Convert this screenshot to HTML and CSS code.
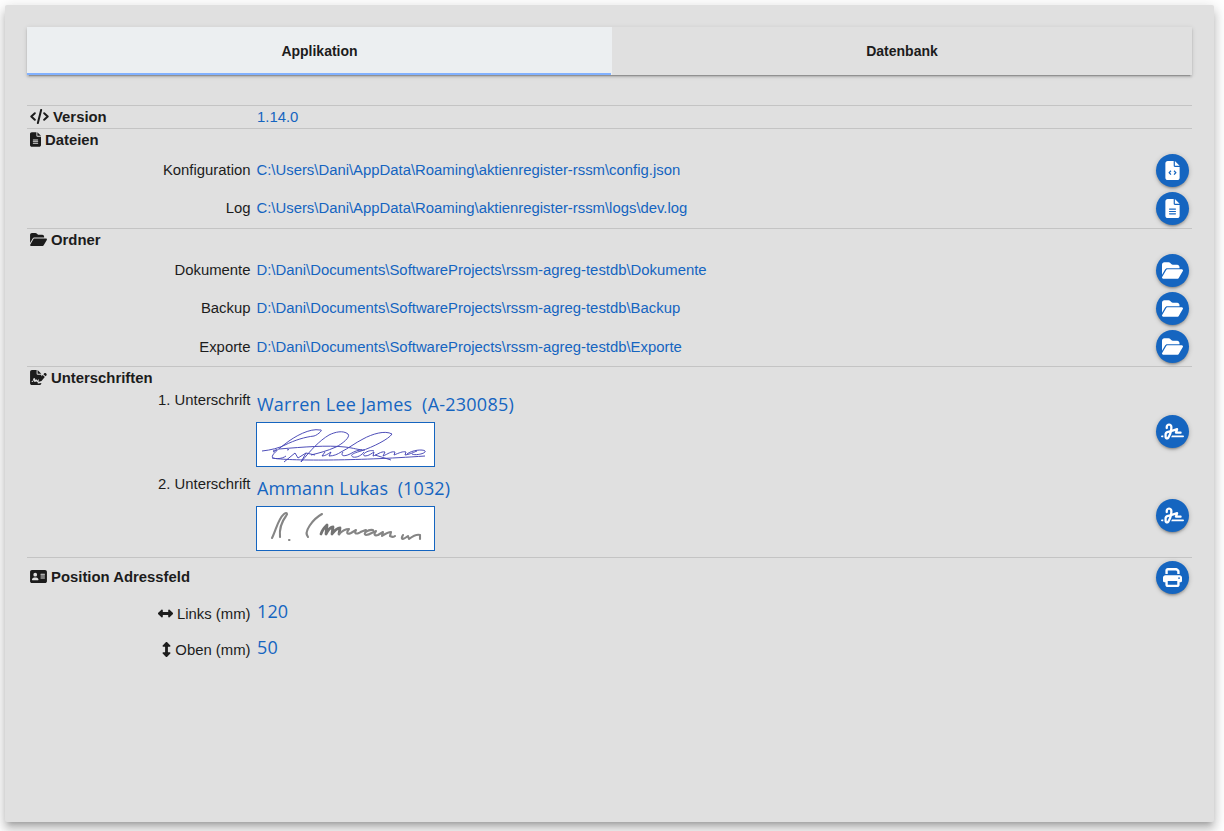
FILE: index.html
```html
<!DOCTYPE html>
<html lang="de">
<head>
<meta charset="utf-8">
<title>Einstellungen</title>
<link rel="stylesheet" href="styles.css">
</head>
<body>
<svg class="defs" aria-hidden="true">
  <symbol id="folder" viewBox="0 0 576 512"><path d="M88.7 223.8L0 375.8V96C0 60.7 28.7 32 64 32H181.5c17 0 33.3 6.7 45.3 18.7l26.5 26.5c12 12 28.3 18.7 45.3 18.7H416c35.3 0 64 28.7 64 64v32H144c-22.8 0-43.8 12.1-55.3 31.8zm27.6 16.1C122.1 230 132.6 224 144 224H544c11.5 0 22 6.1 27.7 16.1s5.7 22.2-.1 32.1l-112 192C453.9 474 443.4 480 432 480H32c-11.5 0-22-6.1-27.7-16.1s-5.7-22.2 .1-32.1l112-192z"/></symbol>
  <symbol id="file" viewBox="0 0 384 512"><path d="M64 0C28.7 0 0 28.7 0 64V448c0 35.3 28.7 64 64 64H320c35.3 0 64-28.7 64-64V160H256c-17.7 0-32-14.3-32-32V0H64zM256 0V128H384L256 0zM112 256H272c8.8 0 16 7.2 16 16s-7.2 16-16 16H112c-8.8 0-16-7.2-16-16s7.2-16 16-16zm0 64H272c8.8 0 16 7.2 16 16s-7.2 16-16 16H112c-8.8 0-16-7.2-16-16s7.2-16 16-16zm0 64H272c8.8 0 16 7.2 16 16s-7.2 16-16 16H112c-8.8 0-16-7.2-16-16s7.2-16 16-16z"/></symbol>
  <symbol id="filecode" viewBox="0 0 384 512"><path d="M64 0C28.7 0 0 28.7 0 64V448c0 35.3 28.7 64 64 64H320c35.3 0 64-28.7 64-64V160H256c-17.7 0-32-14.3-32-32V0H64zM256 0V128H384L256 0z"/><path class="cut" d="M150 262L103 314l47 52M234 262l47 52-47 52"/></symbol>
  <symbol id="code" viewBox="0 0 640 512"><path class="line" d="M160 144L40 256l120 112M480 144l120 112-120 112M376 32L264 480"/></symbol>
  <symbol id="filesign" viewBox="0 0 576 512"><path d="M64 0C28.7 0 0 28.7 0 64V448c0 35.3 28.7 64 64 64H320c35.3 0 64-28.7 64-64V440l-96 18c-24 2-34-10-28-34l4-16h-20c-12 0-22-7-28-18l-6-12-22 27c-14 14-38 10-44-8l-18-57-17 40c-6 20-22 31-43 28H56V376h24c6 0 9-3 11-9l24-74c9-27 45-27 53 0l19 51 15-9c14-11 34-9 42 7l14 22 6-16L384 226V160H256c-17.700 0-32-14.300-32-32V0H64zM256 0V128H384L256 0zM557 130l-15-15c-16-16-41-16-57 0l-30 30 72 72 30-30c15-16 15-42 0-57zM432 167L312 287l-24 98c-2 9 6 16 14 14l88-22 114-138z"/></symbol>
  <symbol id="card" viewBox="0 0 576 512"><path fill-rule="evenodd" d="M64 32C28.700 32 0 60.700 0 96V416c0 35.300 28.700 64 64 64H512c35.300 0 64-28.700 64-64V96c0-35.300-28.700-64-64-64zM144 288h64c44 0 80 36 80 80 0 9-7 16-16 16H80c-9 0-16-7-16-16 0-44 36-80 80-80zM112 192a64 64 0 1 1 128 0 64 64 0 1 1-128 0zM368 160H496c20 0 20 32 0 32H368c-20 0-20-32 0-32zm0 64H496c20 0 20 32 0 32H368c-20 0-20-32 0-32zm0 64H496c20 0 20 32 0 32H368c-20 0-20-32 0-32z"/></symbol>
  <symbol id="print" viewBox="0 0 512 512"><path d="M128 0C92.700 0 64 28.700 64 64v96h64V64H354.700L384 93.300V160h64V93.300c0-17-6.700-33.300-18.700-45.300L400 18.700C388 6.700 371.700 0 354.700 0H128zM384 352v32 64H128V384 368 352H384zm64 32h32c17.700 0 32-14.300 32-32V256c0-35.300-28.700-64-64-64H64c-35.300 0-64 28.700-64 64v96c0 17.700 14.300 32 32 32H64v64c0 35.300 28.700 64 64 64H384c35.300 0 64-28.700 64-64V384zM432 248a24 24 0 1 1 0 48 24 24 0 1 1 0-48z"/></symbol>
  <symbol id="sign" viewBox="0 0 640 512"><path d="M192 128c0-17.700 14.300-32 32-32s32 14.300 32 32v7.800c0 27.700-2.400 55.300-7.100 82.500l-84.400 25.300c-40.600 12.200-68.400 49.600-68.400 92v71.900c0 40 32.500 72.500 72.500 72.500c26 0 50-13.900 62.900-36.500l13.900-24.300c26.800-47 46.500-97.700 58.400-150.500l94.400-28.300-12.500 37.500c-3.300 9.800-1.600 20.500 4.400 28.800s15.700 13.300 26 13.300H544c17.700 0 32-14.300 32-32s-14.300-32-32-32H460.400l18-53.900c3.800-11.300 .9-23.800-7.400-32.400s-20.700-11.800-32.200-8.400L316.400 198.100c2.400-20.700 3.600-41.400 3.600-62.300V128c0-53-43-96-96-96s-96 43-96 96v32c0 17.700 14.300 32 32 32s32-14.300 32-32V128zm-9.200 177l49-14.700c-10.400 33.800-24.500 66.400-42.100 97.200l-13.900 24.300c-1.500 2.600-4.300 4.300-7.400 4.300c-4.700 0-8.500-3.800-8.500-8.500V335.600c0-14.100 9.300-26.600 22.800-30.700zM24 368c-13.300 0-24 10.700-24 24s10.700 24 24 24H64.300c-.2-2.800-.3-5.600-.3-8.500V368H24zm592 48c13.300 0 24-10.700 24-24s-10.700-24-24-24H305.900c-6.700 16.300-14.200 32.300-22.300 48H616z"/></symbol>
  <symbol id="arrow" viewBox="0 0 512 512"><path d="M8 232L118 126c16-15 46-4 46 22v60H348v-60c0-26 30-37 46-22L504 232c11 13 11 35 0 48L394 386c-16 15-46 4-46-22v-60H164v60c0 26-30 37-46 22L8 280c-11-13-11-35 0-48z"/></symbol>
</svg>
<main class="panel">
  <nav class="tabs"><a class="tab active">Applikation</a><a class="tab">Datenbank</a></nav>

  <section class="section version">
    <h2><svg class="ic code"><use href="#code"/></svg>Version</h2><span class="value">1.14.0</span>
  </section>

  <section class="section files">
    <h2><svg class="ic file"><use href="#file"/></svg>Dateien</h2>
    <div class="row"><span class="label">Konfiguration</span><span class="value">C:\Users\Dani\AppData\Roaming\aktienregister-rssm\config.json</span><button class="fab"><svg class="doc"><use href="#filecode"/></svg></button></div>
    <div class="row"><span class="label">Log</span><span class="value">C:\Users\Dani\AppData\Roaming\aktienregister-rssm\logs\dev.log</span><button class="fab"><svg class="doc"><use href="#file"/></svg></button></div>
  </section>

  <section class="section folders">
    <h2><svg class="ic wide"><use href="#folder"/></svg>Ordner</h2>
    <div class="row"><span class="label">Dokumente</span><span class="value">D:\Dani\Documents\SoftwareProjects\rssm-agreg-testdb\Dokumente</span><button class="fab"><svg class="dir"><use href="#folder"/></svg></button></div>
    <div class="row"><span class="label">Backup</span><span class="value">D:\Dani\Documents\SoftwareProjects\rssm-agreg-testdb\Backup</span><button class="fab"><svg class="dir"><use href="#folder"/></svg></button></div>
    <div class="row"><span class="label">Exporte</span><span class="value">D:\Dani\Documents\SoftwareProjects\rssm-agreg-testdb\Exporte</span><button class="fab"><svg class="dir"><use href="#folder"/></svg></button></div>
  </section>

  <section class="section signatures">
    <h2><svg class="ic wide"><use href="#filesign"/></svg>Unterschriften</h2>
    <div class="signrow"><span class="label">1. Unterschrift</span>
      <div class="signer"><span class="name long">Warren Lee James&nbsp; (A-230085)</span>
        <svg class="scan ink" viewBox="0 0 177 43">
          <path d="M5 28C14 27 22 25 28 22 38 17 48 14 57 13c4-1 10-7 6-6C53 5 38 13 28 21c-8 6-15 12-12 14 3 1 9 1 13-2M16 29c8-4 2-2 0-1M30 27l2-.5"/>
          <path d="M22 26c25-2 48-4 66-2 9 1 13 3 20 3"/>
          <path d="M27 39L38 30l3 5 8-5-5 9C54 27 62 18 72 12c6-3 14-5 19-1 3 3-6 10-12 13-9 4-17 6-25 8M49 30l9 2"/>
          <path d="M68 29l-3 4c3 0 6-2 9-4l-2 4c5 0 9-2 12-4 8-4 14-9 22-13 9-5 22-9 29-5-3 5-19 13-31 17-7 2-12 4-8 6 4 1 9-2 11-5M86 29c-3 4 1 5 7 2 5-3 8-4 12-4"/>
          <path d="M117 28c-5-2-14 4-9 5 4 0 7-3 9-4l-1 4c4-1 8-5 12-4l-2 4c5-2 8-5 12-4l-1 3c5-2 9-4 12-3l-1 3c6-1 9-3 12-4M150 31c5-4 16-5 18-3 2 2-9 5-13 3"/>
          <path d="M15 35c16 3 83 3 153-2M118 32l16 5"/>
        </svg>
      </div><button class="fab"><svg class="sig"><use href="#sign"/></svg></button></div>
    <div class="signrow"><span class="label">2. Unterschrift</span>
      <div class="signer"><span class="name">Ammann Lukas&nbsp; (1032)</span>
        <svg class="scan pencil" viewBox="0 0 177 43">
          <path d="M15 31C19 23 21 12 27 7c3-2 4 0 2 2-3 4-7 11-6 21"/>
          <path d="M32 33h.5M65 7C56 12 46 25 51 30"/>
          <path class="thick" d="M64 27c1-4 4-7 6-9l-1 9c2-4 5-7 7-7l-1 7c3-4 5-6 8-6l-1 6"/>
          <path d="M82 27c3-3 7-5 10-5-3 4-2 6 2 4l5-3c-2 4 0 4 3 3 3-2 5-2 7-3M116 23c-5-1-11 4-7 5 4 0 8-4 10-4-3 4-1 5 2 4l5-3-1 4c3-2 6-4 9-4l-1 4c2 1 4 1 5 0M146 28c-3 5 0 5 5 1l1 3c4-3 8-5 11-4l0 4"/>
        </svg>
      </div><button class="fab"><svg class="sig"><use href="#sign"/></svg></button></div>
  </section>

  <section class="section position">
    <div class="poshead"><h2><svg class="ic wide"><use href="#card"/></svg>Position Adressfeld</h2><button class="fab"><svg class="printer"><use href="#print"/></svg></button></div>
    <div class="posrow"><span class="label"><svg class="arr"><use href="#arrow"/></svg>Links (mm)</span><span class="name">120</span></div>
    <div class="posrow"><span class="label"><svg class="arr up"><use href="#arrow"/></svg>Oben (mm)</span><span class="name">50</span></div>
  </section>
</main>
</body>
</html>
```
FILE: styles.css
```css
* { box-sizing: border-box; }
body { margin: 0; padding: 5px 10px 9px 5px; height: 831px; overflow: hidden; background: #fff; color: #1c1c1c; font: 14.86px/20px "Liberation Sans", Arial, sans-serif; }
.defs { display: none; }
svg { fill: currentColor; flex: none; }
.line { fill: none; stroke: currentColor; stroke-width: 68; stroke-linecap: round; stroke-linejoin: round; }
.cut { fill: none; stroke: #1565c0; stroke-width: 34; }
.panel { height: 817px; padding: 22px; border-radius: 2px; background: #e0e0e0; box-shadow: 0 5px 5px -3px rgba(0,0,0,.2), 0 8px 10px 1px rgba(0,0,0,.14), 0 3px 14px 2px rgba(0,0,0,.12); }
.tabs { display: flex; height: 48px; margin-bottom: 30px; box-shadow: 0 3px 1px -2px rgba(0,0,0,.2), 0 2px 2px rgba(0,0,0,.14), 0 1px 5px rgba(0,0,0,.12); }
.tab { flex: 1; display: flex; align-items: center; justify-content: center; font-size: 14px; font-weight: bold; }
.active { flex: 0 0 585px; background: linear-gradient(#82b1ff, #82b1ff) left bottom / 584px 2px no-repeat #eceff1; }
.section { border-top: 1px solid #c4c4c4; }
h2 { display: flex; align-items: center; gap: 4px; width: 227px; height: 22px; margin: 0; padding-left: 3px; font-size: 14.86px; line-height: 22px; white-space: nowrap; }
.ic { height: 15px; margin-top: -1px; }
.code { width: 19px; }
.file { width: 11px; }
.wide { width: 17px; }
.version { display: flex; align-items: center; height: 23px; }
.version .value { margin-left: 3px; }
.files { height: 100px; }
.folders { height: 138px; }
.signatures { height: 191px; }
.label { width: 223.5px; text-align: right; flex: none; }
.value, .name { color: #1565c0; }
.row { display: flex; align-items: center; height: 38.3px; }
.row .value { margin-left: 6px; }
.fab { display: flex; align-items: center; justify-content: center; width: 33px; height: 33px; margin: 0 3px 0 auto; padding: 0; border: 0; border-radius: 50%; color: #fff; background: #1565c0; box-shadow: 0 2px 2px rgba(0,0,0,.14), 0 3px 1px -2px rgba(0,0,0,.12), 0 1px 5px rgba(0,0,0,.2); }
.doc { width: 15px; height: 19px; }
.dir { width: 21px; height: 19px; }
.sig { width: 23px; height: 19px; }
.printer { width: 19px; height: 19px; }
.signrow { display: flex; height: 84px; }
.signrow .label { padding-top: 1px; }
.signrow .fab { margin-top: 26px; }
.signer { display: flex; flex-direction: column; margin-left: 5.5px; }
.name { font: 18px/24px "Open Sans", "Segoe UI", sans-serif; letter-spacing: .1px; white-space: nowrap; }
.long { letter-spacing: .23px; }
.signer .name { height: 33px; padding: 3px 0 0 1px; }
.scan { width: 179px; height: 45px; border: 1px solid #1565c0; background: #fff; fill: none; }
.ink { stroke: #4545b4; stroke-width: .95; stroke-linejoin: round; }
.pencil { stroke: #858585; stroke-width: 2.1; stroke-linecap: round; stroke-linejoin: round; }
.thick { stroke: #737373; stroke-width: 2.8; }
.poshead { display: flex; align-items: center; height: 38px; }
.posrow { display: flex; align-items: center; height: 36px; }
.posrow .label { display: flex; align-items: center; justify-content: flex-end; gap: 4px; }
.posrow .name { margin-left: 6.5px; padding-bottom: 6px; }
.arr { width: 15px; height: 15px; margin-top: -1px; }
.up { transform: rotate(90deg); margin-right: -3px; }
```
